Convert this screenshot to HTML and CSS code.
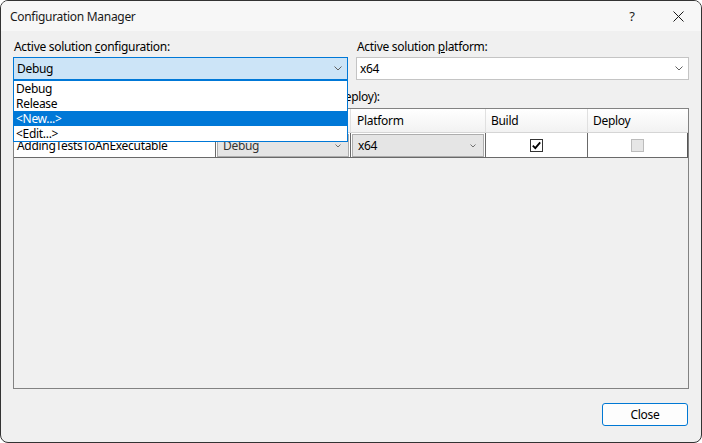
FILE: index.html
```html
<!DOCTYPE html>
<html>
<head>
<meta charset="utf-8">
<title>Configuration Manager</title>
<link rel="stylesheet" href="styles.css">
</head>
<body>
<div class="window">
  <div class="titlebar">
    <span class="title">Configuration Manager</span>
    <span class="tbtn help">?</span>
    <span class="tbtn close-x">
      <svg width="11" height="11" viewBox="0 0 11 11"><path d="M0.5 0.5 L10.5 10.5 M10.5 0.5 L0.5 10.5" stroke="#1a1a1a" stroke-width="1" fill="none"/></svg>
    </span>
  </div>
  <div class="body">
    <div class="top-row">
      <div class="field field-config">
        <label class="lbl">Active solution <u>c</u>onfiguration:</label>
        <div class="combo combo-active">
          <span>Debug</span>
          <svg class="chev" width="8" height="5" viewBox="0 0 8 5"><path d="M0.5 0.5 L4 4 L7.5 0.5" stroke="#606060" stroke-width="1" fill="none"/></svg>
        </div>
        <div class="popup">
          <div class="item">Debug</div>
          <div class="item">Release</div>
          <div class="item item-sel">&lt;New...&gt;</div>
          <div class="item">&lt;Edit...&gt;</div>
        </div>
      </div>
      <div class="field field-platform">
        <label class="lbl">Active solution <u>p</u>latform:</label>
        <div class="combo">
          <span>x64</span>
          <svg class="chev" width="8" height="5" viewBox="0 0 8 5"><path d="M0.5 0.5 L4 4 L7.5 0.5" stroke="#606060" stroke-width="1" fill="none"/></svg>
        </div>
      </div>
    </div>
    <div class="ctx-label"><u>P</u>roject contexts (check the project configurations to build or deploy):</div>
    <div class="grid">
      <div class="grid-rows">
        <div class="hcell">Project</div>
        <div class="hcell">Configuration</div>
        <div class="hcell">Platform</div>
        <div class="hcell">Build</div>
        <div class="hcell hlast">Deploy</div>

        <div class="dcell name">AddingTestsToAnExecutable</div>
        <div class="dcell cbcell">
          <div class="cellcombo"><span class="dim">Debug</span>
            <svg width="6" height="4" viewBox="0 0 6 4"><path d="M0.5 0.5 L3 3 L5.5 0.5" stroke="#707070" stroke-width="1" fill="none"/></svg>
          </div>
        </div>
        <div class="dcell cbcell">
          <div class="cellcombo"><span>x64</span>
            <svg width="6" height="4" viewBox="0 0 6 4"><path d="M0.5 0.5 L3 3 L5.5 0.5" stroke="#707070" stroke-width="1" fill="none"/></svg>
          </div>
        </div>
        <div class="dcell ckcell">
          <span class="check">
            <svg width="11" height="11" viewBox="0 0 11 11"><path d="M1.8 5.6 L4.3 8.1 L9.2 2.3" stroke="#000" stroke-width="1.8" fill="none"/></svg>
          </span>
        </div>
        <div class="dcell ckcell dlast">
          <span class="check check-dis"></span>
        </div>
      </div>
    </div>
    <div class="footer">
      <button class="btn">Close</button>
    </div>
  </div>
</div>
</body>
</html>
```

FILE: styles.css
```css
* { box-sizing: border-box; }
html, body { margin: 0; padding: 0; }
body {
  width: 702px;
  height: 443px;
  overflow: hidden;
  background: #ffffff;
  font-family: "Noto Sans", "Open Sans", sans-serif;
  font-size: 12px;
  letter-spacing: -0.3px;
  color: #000;
}
.window {
  width: 702px;
  height: 443px;
  border: 1px solid #333333;
  border-radius: 8px;
  background: #f0f0f0;
  display: flex;
  flex-direction: column;
  overflow: hidden;
}
.titlebar {
  height: 30px;
  flex: none;
  background: #f7f7f7;
  display: flex;
  align-items: center;
  padding-left: 9px;
}
.title { flex: 1; color: #1a1a1a; }
.tbtn {
  width: 46px;
  height: 30px;
  display: flex;
  align-items: center;
  justify-content: center;
  color: #1a1a1a;
}
.help { font-size: 13px; }
.body {
  flex: 1;
  display: flex;
  flex-direction: column;
  padding: 0 12px 16px 12px;
}
.top-row {
  display: flex;
  gap: 8px;
  margin-top: 8px;
}
.field {
  display: flex;
  flex-direction: column;
  gap: 2px;
  position: relative;
}
.field-config { width: 335px; }
.field-platform { flex: 1; }
.lbl {
  line-height: 16px;
  height: 16px;
  padding-left: 1px;
}
.combo {
  height: 23px;
  border: 1px solid #c4c4c4;
  background: #ffffff;
  display: flex;
  align-items: center;
  justify-content: space-between;
  padding: 0 5px 0 3px;
}
.combo-active {
  background: #cce4f7;
  border-color: #0078d7;
}
.popup {
  position: absolute;
  top: 41px;
  left: 0;
  width: 335px;
  height: 62px;
  border: 1px solid #0078d7;
  background: #ffffff;
  z-index: 5;
}
.item {
  height: 15px;
  line-height: 15px;
  padding-left: 2px;
}
.item-sel {
  background: #0078d7;
  color: #ffffff;
}
.ctx-label {
  margin-top: 9px;
  line-height: 16px;
  height: 16px;
  padding-left: 1px;
}
.grid {
  margin-top: 3px;
  flex: 1;
  border: 1px solid #828282;
  background: #f0f0f0;
}
.grid-rows {
  display: grid;
  grid-template-columns: 202px 135px 135px 102px 100px;
  grid-template-rows: 24px 25px;
}
.hcell {
  background: linear-gradient(#ffffff, #f2f2f2);
  border-right: 1px solid #e0e0e0;
  border-bottom: 1px solid #d5d5d5;
  padding-left: 5px;
  display: flex;
  align-items: center;
}
.hcell:nth-child(3) { padding-left: 6px; }
.hlast { border-right: none; }
.dcell {
  background: #ffffff;
  border-right: 1px solid #696969;
  border-bottom: 1px solid #696969;
  display: flex;
  align-items: center;
}
.name { padding-left: 3px; }
.cbcell {
  padding: 1px 1px 0 1px;
  align-items: stretch;
}
.cellcombo {
  flex: 1;
  border: 1px solid #adadad;
  background: #e5e5e5;
  display: flex;
  align-items: center;
  justify-content: space-between;
  padding: 0 7px 0 5px;
}
.dim { color: #333333; }
.ckcell { justify-content: center; }
.dlast { border-right: 1px solid #555555; }
.check {
  width: 13px;
  height: 13px;
  border: 1px solid #333333;
  background: #ffffff;
  display: flex;
}
.check-dis {
  border-color: #bcbcbc;
  background: #e6e6e6;
}
.footer {
  margin-top: 14px;
  display: flex;
  justify-content: flex-end;
  padding-right: 1px;
}
.btn {
  width: 86px;
  height: 23px;
  border: 1px solid #0078d4;
  border-radius: 3px;
  background: #fdfdfd;
  font-family: inherit;
  font-size: 12px;
  letter-spacing: -0.3px;
  color: #000;
  padding: 0;
}
```
